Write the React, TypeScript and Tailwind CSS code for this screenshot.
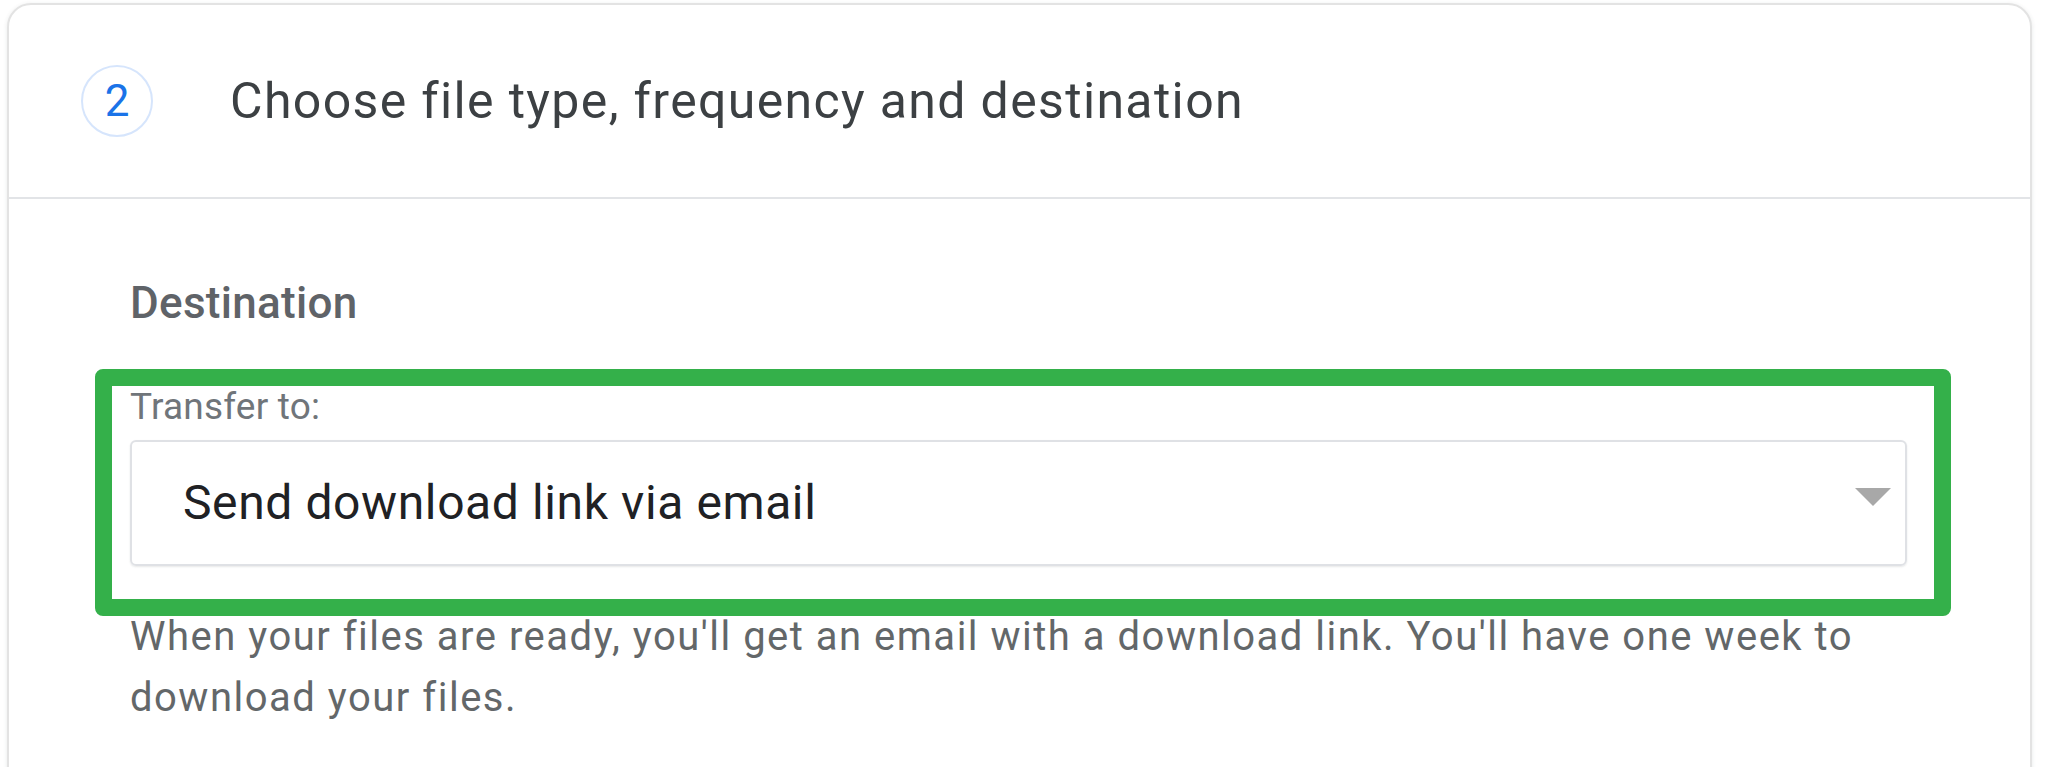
export default function App() {
  return (
    <div className="h-[767px] overflow-hidden bg-white pt-[3px] pl-[7px] pr-[16px] font-['Roboto','Noto_Sans',sans-serif]">
      <div className="h-[820px] rounded-[24px] border-2 border-[#e3e3e3] bg-white shadow-[0_1px_4px_rgba(60,64,67,0.12)]">
        {/* step header */}
        <div className="flex h-[194px] items-center border-b-2 border-[#e2e4e7] pl-[72px]">
          <div className="flex h-[72px] w-[72px] items-center justify-center rounded-full border-2 border-[#d6e5fc] text-[44px] leading-none text-[#1a73e8]">
            2
          </div>
          <h2 className="ml-[77px] text-[50px] leading-[56px] tracking-[1.35px] text-[#3c4043]">
            Choose file type, frequency and destination
          </h2>
        </div>

        <div className="pl-[121px] pr-[123px] pt-[78px]">
          <h3 className="text-[44px] font-medium leading-[52px] tracking-[0.3px] text-[#5f6368]">Destination</h3>

          {/* highlighted select */}
          <div className="mt-[40px] -ml-[35px] -mr-[44px] rounded-[8px] border-[17px] border-[#34b04a] pl-[18px] pr-[27px] pt-[1px] pb-[33px]">
            <label className="block text-[37px] leading-[40px] tracking-[0.2px] text-[#70757a]">Transfer to:</label>
            <div className="mt-[13px] flex h-[126px] items-center justify-between rounded-[6px] border-2 border-[#dfe1e5] pl-[51px] pr-[14px] shadow-[0_1px_2px_rgba(60,64,67,0.12)]">
              <span className="text-[48px] leading-[56px] tracking-[0.6px] text-[#202124]">Send download link via email</span>
              <svg width="36" height="18" viewBox="0 0 36 18" className="mb-[13px]">
                <path d="M0 0 L36 0 L18 18 Z" fill="#a8a8a8" />
              </svg>
            </div>
          </div>

          <p className="-mt-[10px] text-[40px] leading-[61px] tracking-[1.5px] text-[#636769]">
            When your files are ready, you'll get an email with a download link. You'll have one week to download your files.
          </p>
        </div>
      </div>
    </div>
  );
}
